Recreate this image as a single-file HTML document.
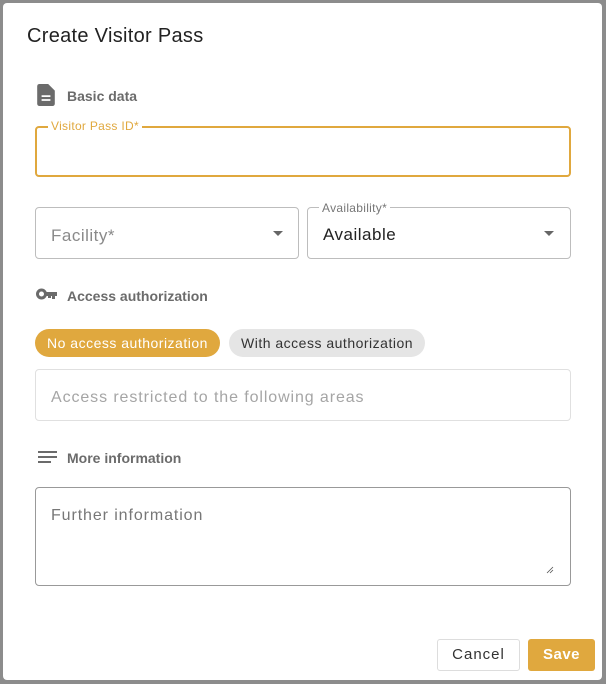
<!DOCTYPE html>
<html><head><style>
*{box-sizing:border-box;margin:0;padding:0}
body{width:606px;height:684px;background:#8c8c8c;font-family:"Liberation Sans",sans-serif;position:relative;overflow:hidden}
.dlg{position:absolute;left:3px;top:3px;width:599px;height:677px;background:#fff;border-radius:4px}
.a{position:absolute;white-space:nowrap}
.t{left:24px;top:22px;font-size:20px;color:#222;letter-spacing:0.3px}
.sec{font-size:14px;font-weight:bold;color:#6b6b6b}
.box{border:1px solid #bdbdbd;border-radius:4px}
.lbl{font-size:12px;background:#fff;padding:0 3px;letter-spacing:0.3px}
.ph{font-size:16px;color:#8a8a8a;letter-spacing:0.9px}
.chip{height:28px;border-radius:14px;font-size:14px;line-height:28px;padding:0 12px;letter-spacing:0.5px}
.arrow{width:0;height:0;border-left:5px solid transparent;border-right:5px solid transparent;border-top:5px solid #666}
</style></head><body>
<div class="dlg">
<div class="a t">Create Visitor Pass</div>
<svg class="a" style="left:34px;top:81px" width="18" height="22" viewBox="0 0 16 20"><path d="M2 0h8l6 6v12a2 2 0 0 1-2 2H2a2 2 0 0 1-2-2V2a2 2 0 0 1 2-2z" fill="#6b6b6b"/><path d="M4 11h8M4 14.5h8" stroke="#fff" stroke-width="1.6"/></svg>
<div class="a sec" style="left:64px;top:85px">Basic data</div>
<div class="a" style="left:32px;top:123px;width:536px;height:51px;border:2px solid #e0a83e;border-radius:4px"></div>
<div class="a lbl" style="left:45px;top:116px;color:#e0a83e">Visitor Pass ID*</div>
<div class="a box" style="left:32px;top:204px;width:264px;height:52px"></div>
<div class="a ph" style="left:48px;top:223px;font-size:17px;letter-spacing:0.5px">Facility*</div>
<div class="a arrow" style="left:270px;top:228px"></div>
<div class="a box" style="left:304px;top:204px;width:264px;height:52px"></div>
<div class="a lbl" style="left:316px;top:198px;color:#777">Availability*</div>
<div class="a" style="left:320px;top:222px;font-size:17px;color:#222;letter-spacing:0.5px">Available</div>
<div class="a arrow" style="left:541px;top:228px"></div>
<svg class="a" style="left:33px;top:285px" width="22" height="12" viewBox="0 0 22 12"><circle cx="5.5" cy="6" r="4" fill="none" stroke="#6b6b6b" stroke-width="3"/><path d="M9 4h12v4h-2v3h-3V8h-1v2h-3V8H9z" fill="#6b6b6b"/></svg>
<div class="a sec" style="left:64px;top:285px">Access authorization</div>
<div class="a chip" style="left:32px;top:326px;background:#e0a83e;color:#fff">No access authorization</div>
<div class="a chip" style="left:226px;top:326px;background:#e5e5e5;color:#333">With access authorization</div>
<div class="a box" style="left:32px;top:366px;width:536px;height:52px;border-color:#e0e0e0"></div>
<div class="a ph" style="left:48px;top:386px;color:#a5a5a5">Access restricted to the following areas</div>
<svg class="a" style="left:35px;top:448px" width="20" height="14"><path d="M0 1h19M0 6h19M0 11h13" stroke="#6b6b6b" stroke-width="2"/></svg>
<div class="a sec" style="left:64px;top:447px">More information</div>
<div class="a box" style="left:32px;top:484px;width:536px;height:99px;border-color:#999"></div>
<div class="a ph" style="left:48px;top:504px;color:#777">Further information</div>
<svg class="a" style="left:543px;top:563px" width="8" height="8"><path d="M1 7L7 1M4 7L7 4" stroke="#555" stroke-width="0.8"/></svg>
<div class="a" style="left:434px;top:636px;width:83px;height:32px;border:1px solid #ddd;border-radius:3px;text-align:center;line-height:30px;font-size:15px;color:#333;letter-spacing:1px">Cancel</div>
<div class="a" style="left:525px;top:636px;width:67px;height:32px;background:#e0a83e;border-radius:3px;text-align:center;line-height:32px;font-size:15px;color:#fff;font-weight:bold;letter-spacing:0.5px">Save</div>
</div>
</body></html>
